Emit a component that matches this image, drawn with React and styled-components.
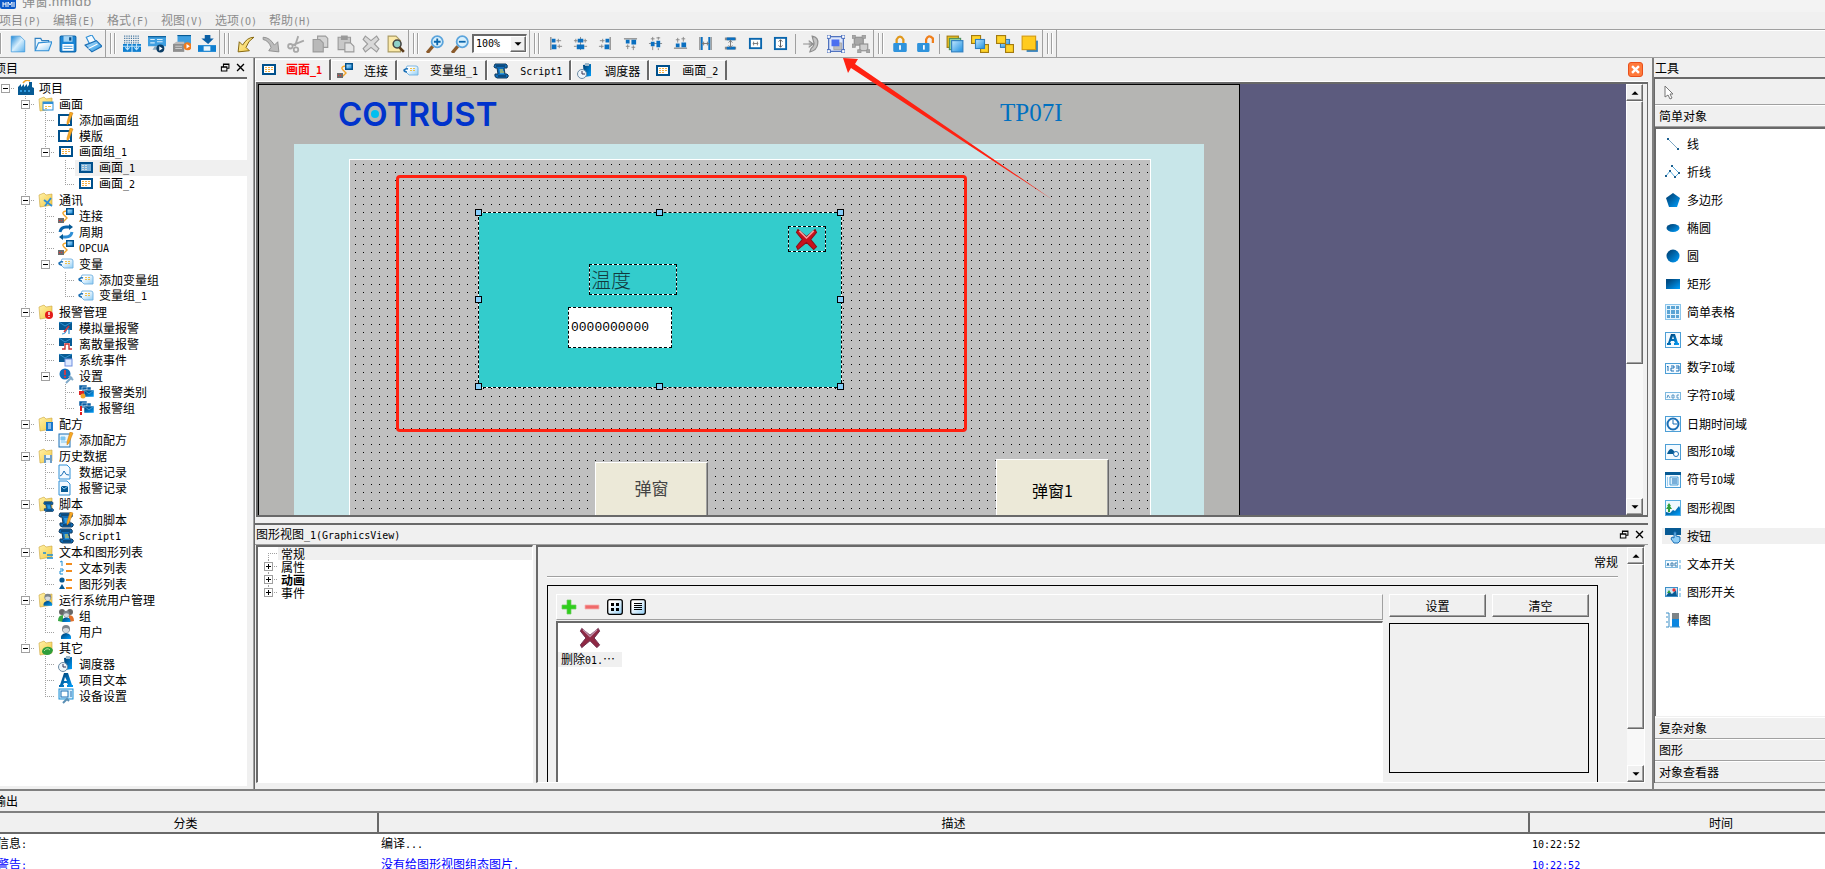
import React from 'react';
import styled, {createGlobalStyle, css} from 'styled-components';


const GlobalStyle = createGlobalStyle`
  * {
    box-sizing: border-box;
  }

  body {
    margin: 0;
    overflow: hidden;
    background: #f0f0f0;
    color: #000;
    font: 12px/16px "Noto Sans CJK SC", sans-serif;
  }

  button, input, select {
    font: inherit;
    color: inherit;
  }

  ul {
    margin: 0;
    padding: 0;
    list-style: none;
  }
`


/* ---------- icons ---------- */

const screenIcon = (
  <>
    <rect x="1" y="2" width="14" height="11" fill="#00508c"/>
    <rect x="3" y="4" width="10" height="7" fill="#fff"/>
    <path d="M4 5h2v1H4zM7 5h2v1H7zM10 5h2v1h-2zM4 7h2v1H4zM7 7h2v1H7zM10 7h2v1h-2zM4 9h2v1H4zM7 9h2v1H7z" fill="#f5b041"/>
  </>
)

const pencil = <path d="M12 0l3 1-4 10-2 2 0-3z" fill="#f7a823" stroke="#c97a10" strokeWidth=".5"/>

const folder = <path d="M1 3l5-2 2 2 6-1v11l-12 2z" fill="url(#gold)" stroke="#c9a23a" strokeWidth=".6"/>

const scroll = (
  <>
    <path d="M2 1h11q2 1 1 4h-3l1 6h2q2 1 1 3l-1 1H4q-3-1-2-4h3L4 5H2Q0 4 2 1z" fill="#0f6cb8" stroke="#123a5c"/>
    <path d="M3 3h9M5 13h8" stroke="#0c2b45"/>
    <path d="M6 6h4l1 5H7z" fill="#2f9be0"/>
  </>
)

const person = (
  <>
    <path d="M3 15q-1-5 5-6 6 1 5 6z" fill="url(#blue)"/>
    <circle cx="8" cy="5" r="4" fill="#7d858c"/>
    <path d="M5 5q3-2 6 0v2q-3 4-6 0z" fill="#d5dade"/>
  </>
)

const tag = (
  <>
    <path d="M4 3h9q2 0 2 2v7H6L2 8z" fill="url(#pale)" stroke="#6fb0e0" strokeWidth=".9"/>
    <path d="M4 9Q1 9 1 7q2-2 4-1" fill="none" stroke="#1b6fb5" strokeWidth="1.500"/>
    <path d="M7 5h2v1H7zM10 5h2v1h-2zM7 7h2v1H7zM10 7h2v1h-2z" fill="#eec04a"/>
  </>
)

const linkIcon = (
  <>
    <path d="M8 3Q3 4 6 7t3 3-4 4" fill="none" stroke="#f2a52a" strokeWidth="1.400"/>
    <rect x="8" y="0" width="8" height="7" fill="#00508c"/>
    <rect x="9.500" y="1.500" width="5" height="4" fill="url(#sky)"/>
    <path d="M0 10h6v5H0z" fill="#6d6d6d"/>
    <path d="M1 12h1v1H1zM3 12h1v1H3z" fill="#e33"/>
  </>
)

const alarmMail = (
  <>
    <path d="M1 2h13v8H1z" fill="#075a94"/>
    <path d="M1 2l6 4 7-4" fill="none" stroke="#3d9fe0" strokeWidth=".8"/>
  </>
)

const alarmStack = (
  <>
    <path d="M1 1h8v5H1zM4 3h9v5H4z" fill="#0a5fa5" stroke="#fff" strokeWidth=".5"/>
    <rect x="6" y="6" width="10" height="7" fill="url(#blue)" stroke="#fff" strokeWidth=".5"/>
    <path d="M6 6l5 4 5-4" fill="none" stroke="#5fb0e8" strokeWidth=".7"/>
  </>
)

const clipboardClock = (
  <>
    <path d="M6 2l8-1v12l-7 1z" fill="url(#blue)"/>
    <path d="M8 0h4v3H8z" fill="#9db7c9"/>
    <circle cx="5" cy="11" r="4.500" fill="#eef5fa" stroke="#6c8aa3"/>
    <path d="M5 8v3h3" fill="none" stroke="#335"/>
  </>
)

const magnifier = (
  <>
    <path d="M1 16l5-6" stroke="#8b5a2b" strokeWidth="3"/>
    <circle cx="10" cy="6" r="5" fill="#d9f0fc" stroke="#5ba4dc" strokeWidth="1.600"/>
  </>
)

const frameBox = <rect x=".5" y=".5" width="15" height="15" fill="#f3faff" stroke="#4d9fd6"/>

const ICONS = {
  newFile: <path d="M2 1h8l4 4v10H2z" fill="url(#file)" stroke="#2f8fd6" strokeWidth=".6"/>,
  open: (
    <>
      <path d="M1 13V3h5l1 2h6v3" fill="#e8f5fd" stroke="#2f7fc0"/>
      <path d="M1 14L4 7l12-1-3 8z" fill="url(#pale)" stroke="#2f8fd6"/>
    </>
  ),
  save: (
    <>
      <rect x="1" y="1" width="14" height="14" rx="1" fill="#1b86d6" stroke="#0a66ad"/>
      <path d="M4 1h8v5H4z" fill="#a5d5f5"/>
      <path d="M9 2h2v3H9z" fill="#0a4f8a"/>
      <path d="M3 8h10v6H3z" fill="#fff"/>
      <path d="M4 10h8M4 12h8" stroke="#5ba4dc"/>
    </>
  ),
  print: (
    <>
      <path d="M2 2l5-2 5 8-6 2z" fill="#f4faff" stroke="#2f8fd6"/>
      <path d="M1 9l10-4 5 5-9 5z" fill="url(#sky)" stroke="#1b6fb5"/>
      <path d="M4 12l8-4" stroke="#fff"/>
    </>
  ),
  compile: (
    <>
      <path d="M1 1h14M1 3h14M1 5h14M1 7h14" stroke="#3a6f9c" strokeDasharray="1 1"/>
      <path d="M0 8h16v7H0z" fill="#0f7fd0"/>
      <path d="M2 11l2 2 2-2M10 11l2 2 2-2M0 10h16M8 8v7M4 7v6M12 7v6" stroke="#bfe3fa" fill="none"/>
    </>
  ),
  simulate: (
    <>
      <path d="M0 1h16v9H0z" fill="#3f9fe0"/>
      <path d="M0 1h16v1H0z" fill="#075a94"/>
      <path d="M2 4h4M8 4h5M8 6h5M2 7h4" stroke="#d5ecfb"/>
      <path d="M6 10h4v3H4z" fill="#8aa9bf"/>
      <circle cx="11" cy="12" r="3.500" fill="#0a3d66"/>
      <path d="M10 10l3 2-3 2z" fill="#fff"/>
    </>
  ),
  simulateOffline: (
    <>
      <path d="M4 0h12v8H4z" fill="#3f9fe0"/>
      <path d="M4 0h12v1H4z" fill="#075a94"/>
      <path d="M0 8h10v7H0z" fill="#8f8f8f"/>
      <path d="M0 8l3-2h7v2z" fill="#bbb"/>
      <path d="M2 10h6M2 12h6" stroke="#c9c9c9"/>
      <circle cx="13" cy="10" r="3.500" fill="#f07a1c"/>
      <path d="M12 8l3 2-3 2z" fill="#fff"/>
    </>
  ),
  download: (
    <>
      <path d="M6 0h5v3h3l-5 5-6-5h3z" fill="#0a5fa5"/>
      <path d="M0 9h16v6H0z" fill="#0f7fd0"/>
      <path d="M5 10h6v4H5z" fill="#e8f5fd"/>
    </>
  ),
  undo: <path d="M1 15l1-9 3 3q4-7 10-7-5 3-7 9l3 3z" fill="url(#gold)" stroke="#7a5a00" strokeWidth=".8"/>,
  redo: <path d="M15 15l-1-9-3 3Q7 2 1 2l0 2q5 1 7 7l-2 3z" fill="#bcbcbc" stroke="#8b8b8b" strokeWidth=".8"/>,
  cut: (
    <g fill="none" stroke="#a8a8a8" strokeWidth="1.600">
      <path d="M10 1L7 10M15 5L5 9"/>
      <circle cx="3" cy="10" r="2"/>
      <circle cx="8" cy="13" r="2"/>
    </g>
  ),
  copy: (
    <g fill="#d4d4d4" stroke="#9a9a9a">
      <path d="M5 1h7l2 2v8H5z"/>
      <path d="M1 4h6l3 3v8H1z" fill="#b9b9b9"/>
    </g>
  ),
  paste: (
    <g fill="#c8c8c8" stroke="#9a9a9a">
      <path d="M1 2h11v11H1z"/>
      <path d="M4 1h5v3H4z" fill="#9a9a9a"/>
      <path d="M7 7h5l3 3v5H7z" fill="#e5e5e5"/>
    </g>
  ),
  remove: (
    <path d="M3 1l5 4 5-4 2 3-4 4 4 4-2 3-5-4-5 4-2-3 4-4-4-4z" fill="#d9d9d9" stroke="#9b9b9b"/>
  ),
  find: (
    <>
      <path d="M1 1h7l4 4v10H1z" fill="#fbe9a8" stroke="#a99a62"/>
      <circle cx="9" cy="8" r="3.500" fill="#8fd0c8" stroke="#444" strokeWidth="1.400"/>
      <path d="M11 11l4 4" stroke="#5d3d1c" strokeWidth="2.400"/>
    </>
  ),
  zoomIn: <>{magnifier}<path d="M10 3v6M7 6h6" stroke="#0a66ad" strokeWidth="1.600"/></>,
  zoomOut: <>{magnifier}<path d="M7 6h6" stroke="#0a66ad" strokeWidth="1.600"/></>,
  alignLeft: (
    <>
      <path d="M3 1v14" stroke="#8b8b8b" strokeWidth="1.400"/>
      <path d="M4 3h4v4H4zM4 9h5v5H4z" fill="#0a6fc0"/>
      <path d="M9 5h5M10 11h5M11 3v4M12 9v4" stroke="#888"/>
    </>
  ),
  alignCenter: (
    <>
      <path d="M8 1v14" stroke="#8b8b8b"/>
      <path d="M5 3h6v4H5zM4 9h8v5H4z" fill="#0a6fc0"/>
      <path d="M1 5h4M11 5h4M1 11h3M12 11h3M3 3v4M13 3v4" stroke="#888"/>
    </>
  ),
  alignRight: (
    <>
      <path d="M13 1v14" stroke="#8b8b8b" strokeWidth="1.400"/>
      <path d="M8 3h4v4H8zM7 9h5v5H7z" fill="#0a6fc0"/>
      <path d="M2 5h5M1 11h5M5 3v4M4 9v4" stroke="#888"/>
    </>
  ),
  alignTop: (
    <>
      <path d="M1 3h14" stroke="#8b8b8b" strokeWidth="1.400"/>
      <path d="M3 4h4v4H3zM9 4h5v5H9z" fill="#0a6fc0"/>
      <path d="M5 9v5M11 10v5M3 11h4M9 12h4" stroke="#888"/>
    </>
  ),
  alignMiddle: (
    <>
      <path d="M1 8h14" stroke="#8b8b8b"/>
      <path d="M3 6h4v5H3zM9 5h4v7H9z" fill="#0a6fc0"/>
      <path d="M5 1v4M5 11v4M11 1v3M11 13v2M3 3h4M9 2h4" stroke="#888"/>
    </>
  ),
  alignBottom: (
    <>
      <path d="M1 13h14" stroke="#8b8b8b" strokeWidth="1.400"/>
      <path d="M3 8h4v4H3zM9 7h5v5H9z" fill="#0a6fc0"/>
      <path d="M5 2v5M11 1v5M3 4h4M9 3h4" stroke="#888"/>
    </>
  ),
  spaceH: (
    <>
      <path d="M2 1v14M14 1v14" stroke="#8b8b8b" strokeWidth="1.400"/>
      <path d="M4 1v14M12 1v14" stroke="#0a6fc0" strokeWidth="2"/>
      <path d="M4 8h8M6 6v4M10 6v4" stroke="#777"/>
    </>
  ),
  spaceV: (
    <>
      <path d="M2 3h12M2 13h12" stroke="#8b8b8b" strokeWidth="3"/>
      <path d="M4 3h9M4 13h9" stroke="#0a6fc0" strokeWidth="3"/>
      <path d="M8 4v8M6 7l2-2 2 2M6 10l2 2 2-2" fill="none" stroke="#777"/>
    </>
  ),
  sameWidth: (
    <>
      <rect x="2" y="3" width="12" height="10" fill="#fff" stroke="#0a66ad" strokeWidth="2"/>
      <path d="M5 8h6M6 6v4M10 6v4" stroke="#777"/>
    </>
  ),
  sameHeight: (
    <>
      <rect x="2" y="2" width="12" height="12" fill="#fff" stroke="#0a66ad" strokeWidth="2"/>
      <path d="M8 4v8M6 6l2-2 2 2M6 10l2 2 2-2" fill="none" stroke="#555"/>
    </>
  ),
  rotate: (
    <path d="M1 8h8M9 1q6 1 5 7t-7 7l1-3q4-3 2-7zM6 5l4 3-4 3" fill="#c4c4c4" stroke="#8d8d8d"/>
  ),
  group: (
    <>
      <rect x="1.500" y="1.500" width="13" height="13" fill="#dfe8fb" stroke="#3b62b8"/>
      <path d="M8 7h5v6H6v-3" fill="#bdbdbd" stroke="#999" strokeWidth=".6"/>
      <rect x="4" y="4" width="7" height="6" fill="#4b6ff0"/>
      <path d="M0 0h3v3H0zM13 0h3v3h-3zM0 13h3v3H0zM13 13h3v3h-3z" fill="#fff" stroke="#3b62b8" strokeWidth=".8"/>
    </>
  ),
  ungroup: (
    <g fill="#a8a8a8" stroke="#8f8f8f">
      <rect x="2" y="2" width="8" height="7"/>
      <rect x="7" y="8" width="7" height="6" fill="#cfcfcf"/>
      <path d="M0 0h3v3H0zM9 0h3v3H9zM0 8h3v3H0zM13 13h3v3h-3zM5 13h3v3H5z" strokeWidth=".6"/>
    </g>
  ),
  lock: (
    <>
      <path d="M5 8V4q3-5 6 0v4" fill="none" stroke="#e0981c" strokeWidth="2"/>
      <rect x="2" y="7" width="12" height="8" rx="1" fill="#2f93dc"/>
      <path d="M8 9v4" stroke="#fff" strokeWidth="1.600"/>
    </>
  ),
  unlock: (
    <>
      <path d="M9 7V4q2-5 6-1v4" fill="none" stroke="#f07f1c" strokeWidth="2"/>
      <rect x="1" y="7" width="11" height="8" rx="1" fill="#2f93dc"/>
      <path d="M7 9v4" stroke="#fff" strokeWidth="1.600"/>
    </>
  ),
  bringFront: (
    <>
      <rect x="1" y="1" width="10" height="10" fill="#f5c518" stroke="#a37b10"/>
      <rect x="3" y="3" width="10" height="10" fill="#8fd0a0" stroke="#4d8f60"/>
      <rect x="5" y="5" width="10" height="10" fill="url(#sky)" stroke="#2f7fc0"/>
    </>
  ),
  bringForward: (
    <>
      <rect x=".5" y=".5" width="8" height="7" fill="#ffd42a" stroke="#a37b10"/>
      <rect x="8.500" y="8.500" width="7" height="7" fill="#ffd42a" stroke="#a37b10"/>
      <rect x="4" y="4" width="8" height="8" fill="url(#sky)" stroke="#2f7fc0"/>
    </>
  ),
  sendBackward: (
    <>
      <rect x="4" y="4" width="8" height="7" fill="url(#sky)" stroke="#2f7fc0"/>
      <rect x=".5" y=".5" width="8" height="7" fill="#ffd42a" stroke="#a37b10"/>
      <rect x="8.500" y="8.500" width="7" height="7" fill="#ffd42a" stroke="#a37b10"/>
    </>
  ),
  sendBack: (
    <>
      <rect x="5" y="5" width="10" height="10" fill="#2f7fc0"/>
      <rect x="1" y="1" width="12" height="12" fill="#ffcb1f" stroke="#d39a10"/>
    </>
  ),

  factory: (
    <>
      <path d="M0 15V7l3-3v3l3-3v3l3-3v3l2-2V2h3v5l2 1v7z" fill="#075a94"/>
      <path d="M5 3q3-4 7-2" fill="none" stroke="#f2a52a" strokeWidth="1.500"/>
      <path d="M2 10h2v2H2zM6 10h2v2H6zM10 10h2v2h-2z" fill="#2f9be0"/>
    </>
  ),
  folderScreen: (
    <>
      {folder}
      <rect x="5" y="6" width="10" height="8" fill="#fff" stroke="#2f8fd6"/>
      <path d="M5 7h10" stroke="#2f8fd6" strokeWidth="2"/>
      <path d="M7 10h2v1H7zM10 10h3v1h-3zM7 12h2v1H7z" fill="#eec04a"/>
    </>
  ),
  addScreen: (
    <>
      <rect x="1" y="3" width="12" height="10" fill="#fff" stroke="#00508c" strokeWidth="2"/>
      {pencil}
    </>
  ),
  screen: screenIcon,
  screenActive: (
    <>
      <rect x="1" y="2" width="14" height="11" fill="#00508c"/>
      <rect x="3" y="4" width="10" height="7" fill="#7db2da"/>
      <path d="M4 5h2v1H4zM7 5h2v1H7zM4 7h2v1H4zM7 7h2v1H7zM4 9h2v1H4zM7 9h2v1H7z" fill="#d9dfe0"/>
    </>
  ),
  folderComm: <>{folder}<path d="M6 8l8 6M13 6l-6 8" stroke="#2f8fd6" strokeWidth="1.800"/></>,
  link: linkIcon,
  cycle: (
    <g fill="none" stroke="#0a66ad" strokeWidth="3">
      <path d="M2 8q1-5 6-5h4"/>
      <path d="M14 8q-1 5-6 5H4" stroke="#2f8fd6"/>
      <path d="M11 0l4 3-4 3zM5 10l-4 3 4 3z" fill="#075a94" stroke="none"/>
    </g>
  ),
  tag,
  folderAlarm: (
    <>
      {folder}
      <circle cx="11" cy="11" r="4" fill="#e31c1c"/>
      <path d="M11 8v3M11 12v1" stroke="#fff" strokeWidth="1.400"/>
    </>
  ),
  alarmAnalog: (
    <>
      {alarmMail}
      <path d="M4 14l5-5 4 5z" fill="#fff"/>
      <path d="M4 14q4 0 5-6l2 1v5" fill="none" stroke="#2f8fd6" strokeWidth="1.200"/>
      <path d="M6 12l5-6" stroke="#d33" strokeWidth="1.400"/>
    </>
  ),
  alarmDiscrete: (
    <>
      {alarmMail}
      <path d="M6 14V7h6v7z" fill="#fff"/>
      <path d="M4 13h3V8h4v5h3" fill="none" stroke="#c33" strokeWidth="1.400"/>
    </>
  ),
  alarmSystem: <>{alarmMail}<rect x="7" y="7" width="7" height="7" fill="#dce8ff" stroke="#6f8fe0"/></>,
  settings: (
    <>
      <circle cx="7" cy="6" r="5.500" fill="#0f6cb8"/>
      <path d="M7 2v5M7 8v2" stroke="#e33" strokeWidth="1.600"/>
      <path d="M8 15l6-6M11 8l4 4" stroke="#7fa9c9" strokeWidth="2"/>
    </>
  ),
  alarmClass: <>{alarmStack}<path d="M1 7h5v4H1z" fill="#d22"/><circle cx="5" cy="12" r="2.500" fill="#f2a52a"/></>,
  alarmGroup: <>{alarmStack}<path d="M3 6v5M3 12v3" stroke="#e31c1c" strokeWidth="2"/></>,
  folderRecipe: <>{folder}<path d="M8 6h7v9H8z" fill="#1b78cc"/><path d="M10 8h3M10 10h3M10 12h3" stroke="#fff"/></>,
  addRecipe: (
    <>
      <rect x="1" y="2" width="11" height="13" fill="#e8f5fd" stroke="#1b6fb5"/>
      <path d="M3 5h4v3H3zM3 10h6" fill="#7cc4f0" stroke="#7cc4f0"/>
      {pencil}
    </>
  ),
  folderHistory: <>{folder}<path d="M6 7h8v8H6z" fill="#6d9dc5"/><path d="M8 7h4v3H8zM8 12h4v3H8z" fill="#e8f5fd"/></>,
  dataLog: (
    <>
      <path d="M1 1h8l3 3v11H1z" fill="#f4faff" stroke="#2f8fd6"/>
      <path d="M2 12q2 0 4-5 2 5 5 4" fill="none" stroke="#1b6fb5"/>
    </>
  ),
  alarmLog: (
    <>
      <path d="M1 1h8l3 3v11H1z" fill="#f4faff" stroke="#2f8fd6"/>
      <path d="M3 6h7v6H3z" fill="#075a94"/>
      <path d="M3 6l3 3 4-3" fill="none" stroke="#7cc4f0"/>
    </>
  ),
  folderScript: <>{folder}<g transform="translate(5 5) scale(.7)">{scroll}</g></>,
  addScript: <>{scroll}{pencil}</>,
  script: <>{scroll}<path d="M7 7h3M7 9h4" stroke="#f2c52a"/></>,
  folderList: <>{folder}<path d="M5 9h3M9 11h6M9 14h6" stroke="#1b8fd6" strokeWidth="1.600"/></>,
  textList: (
    <>
      <path d="M2 2l2-1v5M2 9h3v2H2v3h3" fill="none" stroke="#1b8fd6"/>
      <path d="M8 4h6M8 11h6" stroke="#f28c1c" strokeWidth="1.800"/>
    </>
  ),
  graphicList: (
    <>
      <circle cx="4" cy="4" r="2.600" fill="#075a94"/>
      <path d="M1 13l3-5 3 5z" fill="#075a94"/>
      <path d="M8 4h6M8 12h6" stroke="#f28c1c" strokeWidth="1.800"/>
    </>
  ),
  folderUser: <>{folder}<g transform="translate(3 1) scale(.85)">{person}</g></>,
  users: (
    <>
      <path d="M0 13q0-6 5-6v7z" fill="#3aa845"/>
      <path d="M16 13q0-6-5-6v7z" fill="#e2702a"/>
      <circle cx="4" cy="4" r="3" fill="#666"/>
      <circle cx="12" cy="4" r="3" fill="#666"/>
      <g transform="translate(2 2) scale(.8)">{person}</g>
    </>
  ),
  user: person,
  folderOther: (
    <>
      {folder}
      <path d="M4 12q0-4 4-5 5-1 7 3-1 5-6 5-4 0-5-3z" fill="#2f9e3a"/>
      <path d="M6 11q3-4 6-1" stroke="#b7e5a5" fill="none"/>
    </>
  ),
  scheduler: clipboardClock,
  letterA: (
    <path d="M6 1h4l4 12h1v2H9v-2h1l-1-2H6l-1 2h1v2H1v-2h1zM7 5L6 9h3z" fill="url(#blue)" fillRule="evenodd"/>
  ),
  device: (
    <>
      <rect x="1" y="1" width="14" height="10" fill="#d8eefc" stroke="#1b8fd6"/>
      <rect x="3" y="3" width="7" height="6" fill="#fff" stroke="#1b6fb5"/>
      <path d="M12 4h2M12 6h2M12 8h2" stroke="#1b6fb5"/>
      <path d="M5 15l4-4 2 2" fill="none" stroke="#5a8fb5" strokeWidth="2"/>
    </>
  ),

  line: <><path d="M3 3l10 10" stroke="#7da7c4"/><path d="M2 2h2v2H2zM12 12h2v2h-2z" fill="#1b5f8f"/></>,
  polyline: (
    <>
      <path d="M1 12l4-5 5 6 4-4-7-7" fill="none" stroke="#58ade0"/>
      <path d="M0 11h2v2H0zM4 6h2v2H4zM9 12h2v2H9zM13 8h2v2h-2zM6 1h2v2H6z" fill="#1b5f8f"/>
    </>
  ),
  polygon: <path d="M8 1l7 5-3 9H4L1 6z" fill="url(#blue)"/>,
  ellipse: <ellipse cx="8" cy="8" rx="6.500" ry="4" fill="url(#blue)"/>,
  circle: <circle cx="8" cy="8" r="6.500" fill="url(#blue)"/>,
  rect: <rect x="1" y="3" width="14" height="10" fill="url(#blue)"/>,
  table: (
    <>
      <rect x=".5" y=".5" width="15" height="15" fill="#e4f3fc" stroke="#8cc6ec"/>
      <path d="M2 2h3v3H2zM6 2h4v3H6zM11 2h3v3h-3zM2 6h3v4H2zM6 6h4v4H6zM11 6h3v4h-3zM2 11h3v3H2zM6 11h4v3H6zM11 11h3v3h-3z" fill="#5ba4d4"/>
    </>
  ),
  textField: (
    <>
      {frameBox}
      <path d="M6 2h4l3 9h1v2H9v-2h1l-1-2H6l-1 2h1v2H2v-2h1zM8 4L7 7h2z" fill="url(#blue)" fillRule="evenodd"/>
    </>
  ),
  numberField: (
    <>
      <rect x=".5" y="3.500" width="15" height="10" fill="#f3faff" stroke="#4d9fd6"/>
      <path d="M2 7l1-1v5M6 6h3v2H6v3h3M11 6h3v5h-3M11 8h3" fill="none" stroke="#1b6fb5"/>
    </>
  ),
  charField: (
    <>
      <rect x=".5" y="4.500" width="15" height="7" fill="#f3faff" stroke="#7db9e0"/>
      <path d="M2 10l1-3 2 3M7 10V7h2v3zM14 7h-2v3h2" fill="none" stroke="#4d8fbf" strokeWidth=".9"/>
    </>
  ),
  dateField: (
    <>
      {frameBox}
      <circle cx="8" cy="8" r="5.500" fill="#fff" stroke="#1b6fb5" strokeWidth="2"/>
      <path d="M8 4v4h4" fill="none" stroke="#1b6fb5"/>
    </>
  ),
  graphicField: (
    <>
      {frameBox}
      <path d="M2 10q2-5 4-5t5 5z" fill="#075a94"/>
      <circle cx="11" cy="10" r="2.500" fill="#fff" stroke="#1b6fb5"/>
    </>
  ),
  symbolField: (
    <>
      {frameBox}
      <path d="M0 0h16v3H0z" fill="#075a94"/>
      <path d="M2 5h1v9H2z" fill="#9bcdf0"/>
      <path d="M5 5h8v8H5z" fill="#d8eefc" stroke="#4d9fd6"/>
      <path d="M7 7h5M7 9h5M7 11h5" stroke="#1b6fb5"/>
    </>
  ),
  graphicView: (
    <>
      <rect x=".5" y=".5" width="15" height="15" fill="#eef8fe" stroke="#58ade0"/>
      <path d="M1 15v-3l4 1 3-3 2 1 4-5 1 2v7z" fill="url(#blue)"/>
      <path d="M4 3l2 3H5l2 3H5v3H3V9H1l2-3H2z" fill="#2f9e3a"/>
    </>
  ),
  button: (
    <>
      <path d="M0 0h16v7H0z" fill="#075a94"/>
      <path d="M9 4h2v4l4 1v4l-2 2H9l-3-4 1-2 2 1z" fill="#8fcdf5" stroke="#1b6fb5"/>
    </>
  ),
  textSwitch: (
    <>
      <rect x=".5" y="4.500" width="12" height="7" fill="#f3faff" stroke="#7db9e0"/>
      <path d="M2 10l1-3 1 3M6 10V7h2v3zM12 7h-2v3h2" fill="none" stroke="#3d7faf"/>
      <path d="M15 4v3M15 9v4" stroke="#58ade0"/>
    </>
  ),
  graphicSwitch: (
    <>
      <rect x=".5" y="3.500" width="12" height="9" fill="#cfe8fa" stroke="#3d8fc6"/>
      <path d="M1 12l3-4 3 2 4-4 1 6z" fill="#075a94"/>
      <path d="M2 9l2-3 2 3z" fill="#2f9e3a"/>
      <circle cx="9" cy="6" r="1.700" fill="#e33"/>
      <path d="M15 4v3M15 9v4" stroke="#58ade0"/>
    </>
  ),
  bar: (
    <>
      <path d="M7 1h7v6H7z" fill="#7d8488"/>
      <path d="M7 7h7v8H7z" fill="#0a86e0"/>
      <path d="M1 1h3M1 5h2M1 10h2M1 15h3M4 1v14M5 15h10" stroke="#3d8fc6" fill="none"/>
    </>
  ),
  add: <path d="M6 1h4v5h5v4h-5v5H6v-5H1V6h5z" fill="#2fcf1c" stroke="#6fc95f" strokeWidth=".7"/>,
  minus: <path d="M1 6h14v4H1z" fill="#f06a6a" stroke="#f5b5b5" strokeWidth=".8"/>,
  gridView: (
    <>
      <rect x=".7" y=".7" width="14.600" height="14.600" rx="2" fill="url(#pale)" stroke="#000" strokeWidth="1.300"/>
      <path d="M4 4h3v3H4zM9 4h3v3H9zM4 9h3v3H4zM9 9h3v3H9z"/>
    </>
  ),
  listView: (
    <>
      <rect x=".7" y=".7" width="14.600" height="14.600" rx="2" fill="url(#pale)" stroke="#000" strokeWidth="1.300"/>
      <path d="M4 4.500h8M4 6.500h8M4 8.500h8M4 10.500h8" stroke="#000"/>
    </>
  ),
  cross: (
    <>
      <path d="M2 1l6 5 6-5 1 2-4 5 4 5-2 2-5-5-6 5-1-2 4-5-4-5z" fill="#c8101c" stroke="#8a1018" strokeWidth=".7"/>
      <path d="M3 2l5 5 5-5" fill="none" stroke="#f2a5a0"/>
    </>
  ),
  crossDim: (
    <>
      <path d="M2 1l6 5 6-5 1 2-4 5 4 5-2 2-5-5-6 5-1-2 4-5-4-5z" fill="#8f2843" stroke="#6d2f50" strokeWidth=".7"/>
      <path d="M3 2l5 5 5-5" fill="none" stroke="#bf93ad"/>
    </>
  ),
  pointer: <path d="M5 2v11l3-2 2 4 2-1-2-4h3z" fill="#fff" stroke="#777"/>,
  float: <path d="M5 6V3h8v6h-3M5 3.500h8M2 7h8v6H2zM2 7.500h8" fill="none" stroke="#000" strokeWidth="1.500"/>,
  close: <path d="M3 3l10 10M13 3L3 13" stroke="#000" strokeWidth="2"/>,
  up: <path d="M4 10h8L8 6z"/>,
  down: <path d="M4 6h8l-4 4z"/>,
  app: (
    <>
      <rect width="16" height="16" rx="2" fill="#0a58c8"/>
      <path d="M3 9v5M3 11h3M6 9v5M8 14V9l2 3 2-3v5M14 9v5" fill="none" stroke="#fff"/>
    </>
  ),
}

const IconStl = styled.svg`
  flex: none;
  display: block;
  width: ${p => p.$size || 16}px;
  height: ${p => p.$size || 16}px;
`

const Icon = ({name, size}) => (
  <IconStl viewBox="0 0 16 16" $size={size} aria-hidden="true">{ICONS[name]}</IconStl>
)

const GradientsStl = styled.svg`
  position: absolute;
  width: 0;
  height: 0;
`

const Gradients = () => (
  <GradientsStl aria-hidden="true">
    <defs>
      <linearGradient id="blue" x1="0" y1="0" x2="1" y2="1">
        <stop offset=".2" stopColor="#004c84"/>
        <stop offset="1" stopColor="#00a0ff"/>
      </linearGradient>
      <linearGradient id="sky" x1="0" y1="0" x2="1" y2="1">
        <stop offset="0" stopColor="#c4e8ff"/>
        <stop offset="1" stopColor="#1b8fe0"/>
      </linearGradient>
      <linearGradient id="pale" x1="0" y1="0" x2="1" y2="1">
        <stop offset=".3" stopColor="#fff"/>
        <stop offset="1" stopColor="#8fcdf5"/>
      </linearGradient>
      <linearGradient id="file" x1="0" y1="0" x2="1" y2="1">
        <stop offset="0" stopColor="#1b86d6"/>
        <stop offset=".5" stopColor="#d8effd"/>
        <stop offset="1" stopColor="#5bb0ec"/>
      </linearGradient>
      <linearGradient id="gold" x1="0" y1="0" x2="1" y2="1">
        <stop offset="0" stopColor="#fff2a8"/>
        <stop offset="1" stopColor="#f3c945"/>
      </linearGradient>
    </defs>
  </GradientsStl>
)


/* ---------- text ---------- */

// half-width latin next to 12px hanzi
const LatinStl = styled.span`
  font-family: "DejaVu Sans Mono", monospace;
  font-size: 10px;
`

const Label = ({children}) => (
  children.split(/([\x20-\x7e]+)/).filter(Boolean).map((run, i) => (
    /[\x20-\x7e]/.test(run) ? <LatinStl key={i}>{run}</LatinStl> : run
  ))
)


/* ---------- window frame ---------- */

const raised = css`
  border: 1px solid;
  border-color: #fff #696969 #696969 #fff;
  box-shadow: inset -1px -1px #a0a0a0;
`

const sunken = css`
  border-style: solid;
  border-width: 2px 1px 1px 2px;
  border-color: #696969 #fff #fff #696969;
`

const WindowStl = styled.div`
  display: flex;
  flex-direction: column;
  height: calc(100vh + 18px);
  margin: -18px 0 0 -6px;
  background: #f0f0f0;
  white-space: nowrap;
`

const TitleBarStl = styled.header`
  display: flex;
  align-items: center;
  gap: 6px;
  flex: none;
  height: 30px;
  padding: 8px 0 0 6px;
  background: #f3f3f3;
  color: #8c8c8c;
  font-size: 13px;
`

const MenuBarStl = styled.nav`
  display: flex;
  flex: none;
  height: 17px;
`

const MenuButtonStl = styled.button`
  width: 54px;
  padding: 0 0 0 5px;
  border: 0;
  background: none;
  color: #8c8c8c;
  text-align: left;
  line-height: 16px;
`

const ToolbarStl = styled.div`
  display: flex;
  flex: none;
  height: 29px;
  margin-left: -1px;
  border-top: 1px solid #a0a0a0;
  border-bottom: 1px solid #a0a0a0;
  box-shadow: inset 0 1px #fff;
`

const ToolGroupStl = styled.div`
  display: flex;
  align-items: center;
  padding-left: 3px;
  border-right: 1px solid #a0a0a0;
  margin-right: 1px;
`

const HandleStl = styled.div`
  width: 5px;
  height: 21px;
  margin-right: 4px;
  border: 1px solid #a0a0a0;
  border-width: 0 1px;
  box-shadow: inset 1px 0 #fff, 1px 0 #fff;
`

const ToolButtonStl = styled.button`
  display: flex;
  align-items: center;
  justify-content: center;
  width: 25px;
  height: 24px;
  padding: 0;
  border: 0;
  background: none;
`

const DividerStl = styled.div`
  width: 1px;
  height: 20px;
  margin: 0 2px;
  background: #a0a0a0;
`

const ZoomBoxStl = styled.div`
  position: relative;
  width: 55px;
  height: 19px;
  margin-right: 2px;
  background: #fff;
  ${sunken}
`

const ZoomSelectStl = styled.select`
  display: block;
  width: 100%;
  height: 16px;
  padding: 0 0 0 2px;
  border: 0;
  outline: 0;
  appearance: none;
  background: none;
  font: 10px/16px "DejaVu Sans Mono", monospace;
`

const ZoomArrowStl = styled.div`
  position: absolute;
  top: 0;
  right: 0;
  display: flex;
  align-items: center;
  justify-content: center;
  width: 16px;
  height: 16px;
  background: #f0f0f0;
  pointer-events: none;
  ${raised}
`

const TOOL_GROUPS = [
  ['newFile', 'open', 'save', 'print'],
  ['compile', 'simulate', 'simulateOffline', 'download'],
  ['undo', 'redo', 'cut', 'copy', 'paste', 'remove', 'find'],
  ['zoomIn', 'zoomOut', 'zoomBox'],
  ['alignLeft', 'alignCenter', 'alignRight', 'alignTop', 'alignMiddle', 'alignBottom', 'spaceH', 'spaceV', 'sameWidth', 'sameHeight', '|', 'rotate', 'group', 'ungroup'],
  ['lock', 'unlock', '|', 'bringFront', 'bringForward', 'sendBackward', 'sendBack'],
  [],
]

const ARRANGE_TOOLS = TOOL_GROUPS[4].slice(0, 10)

const ZoomBox = () => (
  <ZoomBoxStl>
    <ZoomSelectStl aria-label="缩放" defaultValue="100%">
      <option>100%</option>
    </ZoomSelectStl>
    <ZoomArrowStl><Icon name="down" size={14}/></ZoomArrowStl>
  </ZoomBoxStl>
)

const Tool = ({name}) => {
  if (name === '|') return <DividerStl/>
  if (name === 'zoomBox') return <ZoomBox/>
  return (
    <ToolButtonStl type="button" aria-label={name}>
      <Icon name={name} size={ARRANGE_TOOLS.includes(name) ? 15 : 18}/>
    </ToolButtonStl>
  )
}

const Toolbar = () => (
  <ToolbarStl>
    {TOOL_GROUPS.map((group, i) => (
      <ToolGroupStl key={i}>
        <HandleStl/>
        {group.map((name, j) => <Tool key={j} name={name}/>)}
      </ToolGroupStl>
    ))}
  </ToolbarStl>
)

const WorkspaceStl = styled.div`
  display: grid;
  grid-template-columns: 260px minmax(0, 1fr) 177px;
  flex: 1;
  min-height: 0;
`

const DockTitleStl = styled.div`
  display: flex;
  align-items: center;
  gap: 2px;
  flex: none;
  height: ${p => p.$height || 19}px;
  padding: 0 ${p => p.$right || 0}px 0 ${p => p.$left || 0}px;
`

const DockNameStl = styled.h2`
  flex: 1;
  margin: 0;
  font-size: 12px;
  font-weight: 400;
`

const DockButtonStl = styled.button`
  width: 13px;
  height: 13px;
  padding: 1px;
  border: 0;
  background: none;
`

const DockButtons = () => (
  <>
    <DockButtonStl type="button" aria-label="浮动"><Icon name="float" size={11}/></DockButtonStl>
    <DockButtonStl type="button" aria-label="关闭"><Icon name="close" size={11}/></DockButtonStl>
  </>
)


/* ---------- scroll bar ---------- */

const ScrollBarStl = styled.div`
  display: flex;
  flex-direction: column;
  flex: none;
  width: 17px;
  background: #f8f8f8;
`

const ScrollButtonStl = styled.button`
  display: flex;
  align-items: center;
  justify-content: center;
  flex: none;
  height: 17px;
  padding: 0;
  background: #f0f0f0;
  ${raised}
`

const ThumbStl = styled.div`
  flex: ${p => p.$share};
  background: #f0f0f0;
  ${raised}
`

const RestStl = styled.div`
  flex: ${p => p.$share};
`

const ScrollBar = ({share}) => (
  <ScrollBarStl>
    <ScrollButtonStl type="button" aria-label="向上滚动"><Icon name="up" size={14}/></ScrollButtonStl>
    <ThumbStl $share={share}/>
    <RestStl $share={100 - share}/>
    <ScrollButtonStl type="button" aria-label="向下滚动"><Icon name="down" size={14}/></ScrollButtonStl>
  </ScrollBarStl>
)


/* ---------- tree ---------- */

const TreeRowStl = styled.div`
  display: flex;
  height: ${p => p.$height}px;
`

const TreeItemStl = styled.div`
  display: flex;
  align-items: center;
  gap: 5px;
  flex: 1;
  padding-left: 3px;
  line-height: ${p => p.$height}px;
  font-weight: ${p => p.$bold ? 700 : 400};
  background: ${p => p.$active ? '#f0f0f0' : 'none'};
`

const BranchStl = styled.svg`
  flex: none;
  width: 20px;
  height: ${p => p.$height}px;
`

const Branch = ({height, up, down, across, sign}) => {
  const mid = Math.floor(height / 2)
  return (
    <BranchStl viewBox={`0 0 20 ${height}`} $height={height} aria-hidden="true" shapeRendering="crispEdges">
      <g stroke="#a0a0a0" strokeDasharray="1 1">
        {up && <path d={`M10.5 0V${mid}`}/>}
        {down && <path d={`M10.5 ${mid}V${height}`}/>}
        {across && <path d={`M10 ${mid + 0.5}H20`}/>}
      </g>
      {sign && (
        <>
          <rect x="6.5" y={mid - 3.5} width="8" height="8" fill="#fff" stroke="#a0a0a0"/>
          <path d={`M8 ${mid + 0.5}h5${sign === '+' ? `M10.5 ${mid - 2}v5` : ''}`} stroke="#000"/>
        </>
      )}
    </BranchStl>
  )
}

const TreeNodes = ({nodes, height, guides = []}) => (
  <ul>
    {nodes.map((node, i) => {
      const last = i === nodes.length - 1
      const root = guides.length === 0
      return (
        <li key={node.label}>
          <TreeRowStl $height={height}>
            {guides.map((on, k) => <Branch key={k} height={height} up={on} down={on}/>)}
            <Branch
              height={height}
              up={!root || i > 0}
              down={!last}
              across
              sign={node.sign || (node.children ? '-' : null)}
            />
            <TreeItemStl $height={height} $active={node.active} $bold={node.bold}>
              {node.icon && <Icon name={node.icon}/>}
              <span><Label>{node.label}</Label></span>
            </TreeItemStl>
          </TreeRowStl>
          {node.children && <TreeNodes nodes={node.children} height={height} guides={[...guides, !last]}/>}
        </li>
      )
    })}
  </ul>
)

const n = (icon, label, children) => ({icon, label, children})

const PROJECT = [
  n('factory', '项目', [
    n('folderScreen', '画面', [
      n('addScreen', '添加画面组'),
      n('addScreen', '模版'),
      n('screen', '画面组_1', [
        {icon: 'screenActive', label: '画面_1', active: true},
        n('screen', '画面_2'),
      ]),
    ]),
    n('folderComm', '通讯', [
      n('link', '连接'),
      n('cycle', '周期'),
      n('link', 'OPCUA'),
      n('tag', '变量', [
        n('tag', '添加变量组'),
        n('tag', '变量组_1'),
      ]),
    ]),
    n('folderAlarm', '报警管理', [
      n('alarmAnalog', '模拟量报警'),
      n('alarmDiscrete', '离散量报警'),
      n('alarmSystem', '系统事件'),
      n('settings', '设置', [
        n('alarmClass', '报警类别'),
        n('alarmGroup', '报警组'),
      ]),
    ]),
    n('folderRecipe', '配方', [
      n('addRecipe', '添加配方'),
    ]),
    n('folderHistory', '历史数据', [
      n('dataLog', '数据记录'),
      n('alarmLog', '报警记录'),
    ]),
    n('folderScript', '脚本', [
      n('addScript', '添加脚本'),
      n('script', 'Script1'),
    ]),
    n('folderList', '文本和图形列表', [
      n('textList', '文本列表'),
      n('graphicList', '图形列表'),
    ]),
    n('folderUser', '运行系统用户管理', [
      n('users', '组'),
      n('user', '用户'),
    ]),
    n('folderOther', '其它', [
      n('scheduler', '调度器'),
      n('letterA', '项目文本'),
      n('device', '设备设置'),
    ]),
  ]),
]

const ProjectDockStl = styled.aside`
  display: flex;
  flex-direction: column;
  min-height: 0;
  padding: 0 6px 3px 0;
  border-right: 1px solid #a0a0a0;
`

const ProjectTreeStl = styled.div`
  flex: 1;
  min-height: 0;
  overflow: hidden;
  padding: 1px 0 0 1px;
  border-top: 2px solid #696969;
  background: #fff;
`


/* ---------- editor ---------- */

const CenterStl = styled.main`
  position: relative;
  display: flex;
  flex-direction: column;
  min-width: 0;
  min-height: 0;
  padding-bottom: 3px;
  border-left: 1px solid #696969;
`

const TabStripStl = styled.div`
  display: flex;
  align-items: flex-start;
  flex: none;
  height: 24px;
  padding: 1px 5px 0 0;
  border-bottom: 1px solid #fff;
`

const TabStl = styled.button`
  display: flex;
  align-items: center;
  gap: ${p => p.$active ? 9 : 11}px;
  height: ${p => p.$active ? 21 : 20}px;
  margin-top: ${p => p.$active ? 0 : 1}px;
  padding: 0 7px 0 5px;
  border: 1px solid #fff;
  border-right: 2px solid #696969;
  border-bottom: 0;
  background: #f0f0f0;
  color: ${p => p.$active ? '#f00' : '#000'};
  font-weight: ${p => p.$active ? 700 : 400};
  line-height: 18px;
`

const CloseTabStl = styled.button`
  display: flex;
  align-items: center;
  justify-content: center;
  width: 15px;
  height: 15px;
  margin: 3px 0 0 auto;
  padding: 0;
  border: 1px solid #e8501c;
  border-radius: 3px;
  background: #ff7a3c;
`

const TABS = [
  ['screen', '画面_1'],
  ['link', '连接'],
  ['tag', '变量组_1'],
  ['script', 'Script1'],
  ['scheduler', '调度器'],
  ['screen', '画面_2'],
]

const EditorFrameStl = styled.section`
  display: flex;
  flex: 1;
  min-height: 0;
  margin-left: 1px;
  padding-right: 4px;
  border: 2px solid #696969;
  border-right: 1px solid #696969;
`

const CanvasStl = styled.div`
  position: relative;
  flex: 1;
  overflow: hidden;
  background: #5c5b7e;
`

const DeviceStl = styled.div`
  position: absolute;
  left: 0;
  top: 0;
  width: 982px;
  height: 600px;
  border: 1px solid #000;
  background: #b5b5b3;
`

const LogoStl = styled.div`
  position: absolute;
  left: 79px;
  top: 12px;
  color: #0033cc;
  font: 600 33px/34px Inter, sans-serif;
`

const LogoDotStl = styled.i`
  position: absolute;
  left: 33px;
  top: 13px;
  width: 8px;
  height: 8px;
  border-radius: 50%;
  background: #00bff0;
`

const ModelNameStl = styled.div`
  position: absolute;
  left: 741px;
  top: 14px;
  color: #0070c0;
  font: 25px/28px "Liberation Serif", serif;
`

const BezelStl = styled.div`
  position: absolute;
  left: 35px;
  top: 59px;
  width: 910px;
  height: 540px;
  background: #c8e6e9;
`

const ScreenStl = styled.div`
  position: absolute;
  left: 55px;
  top: 15px;
  width: 802px;
  height: 500px;
  border: 1px solid #fff;
  background: #c0c0c0 conic-gradient(from 90deg at 7px 7px, #000 90deg, transparent 0) -2px -3px / 8px 8px;
`

// dashed outline, black with white in the gaps
const marquee = fill => css`
  border: 1px dashed #000;
  outline: 0;
  background: linear-gradient(${fill}, ${fill}) padding-box, #fff;
`

const PopupStl = styled.div`
  position: absolute;
  left: 128px;
  top: 52px;
  width: 364px;
  height: 176px;
  ${marquee('#33cccc')}
`

const GripStl = styled.i`
  position: absolute;
  left: ${p => p.$x};
  top: ${p => p.$y};
  width: 7px;
  height: 7px;
  margin: -4px;
  border: 1px solid #000;
  background: #87cefa;
`

const GRIPS = [
  ['0%', '0%'], ['50%', '0%'], ['100%', '0%'],
  ['0%', '50%'], ['100%', '50%'],
  ['0%', '100%'], ['50%', '100%'], ['100%', '100%'],
]

const PopupCloseStl = styled.button`
  position: absolute;
  left: 309px;
  top: 13px;
  display: flex;
  align-items: center;
  justify-content: center;
  width: 38px;
  height: 26px;
  padding: 0 2px 0 0;
  ${marquee('#33cccc')}
`

const PopupLabelStl = styled.label`
  position: absolute;
  left: 110px;
  top: 51px;
  width: 88px;
  height: 31px;
  padding-left: 1px;
  color: #12383c;
  font-size: 20px;
  font-weight: 300;
  line-height: 29px;
  ${marquee('#33cccc')}
`

const PopupInputStl = styled.input`
  position: absolute;
  left: 89px;
  top: 94px;
  width: 104px;
  height: 41px;
  padding: 0 2px;
  font: 13px/16px "Liberation Mono", monospace;
  ${marquee('#fff')}
`

const ScreenButtonStl = styled.button`
  position: absolute;
  left: ${p => p.$x}px;
  top: ${p => p.$y}px;
  width: 113px;
  height: ${p => p.$height}px;
  padding: 0 0 8px;
  background: #ece9d8;
  color: ${p => p.$color};
  font-size: ${p => p.$size}px;
  ${raised}
`

const MarkFrameStl = styled.div`
  position: absolute;
  left: 46px;
  top: 15px;
  width: 571px;
  height: 257px;
  border: 3px solid #ff2212;
  border-radius: 4px;
`

const MarkArrowStl = styled.svg`
  position: absolute;
  left: 587px;
  top: 0;
  width: 214px;
  height: 144px;
  pointer-events: none;
`

const Editor = () => (
  <>
    <TabStripStl>
      {TABS.map(([icon, label], i) => (
        <TabStl key={label} type="button" $active={i === 0}>
          <Icon name={icon}/>
          <span><Label>{label}</Label></span>
        </TabStl>
      ))}
      <CloseTabStl type="button" aria-label="关闭画面">
        <IconStl viewBox="0 0 16 16" $size={11}>
          <path d="M3 3l10 10M13 3L3 13" stroke="#fff" strokeWidth="3.500"/>
        </IconStl>
      </CloseTabStl>
    </TabStripStl>

    <EditorFrameStl>
      <CanvasStl>
        <DeviceStl>
          <LogoStl>COTRUST<LogoDotStl/></LogoStl>
          <ModelNameStl>TP07I</ModelNameStl>
          <BezelStl>
            <ScreenStl>
              <PopupStl>
                <PopupCloseStl type="button" aria-label="关闭弹窗"><Icon name="cross" size={23}/></PopupCloseStl>
                <PopupLabelStl htmlFor="temperature">温度</PopupLabelStl>
                <PopupInputStl id="temperature" defaultValue="0000000000"/>
                {GRIPS.map(([x, y]) => <GripStl key={x + y} $x={x} $y={y}/>)}
              </PopupStl>
              <ScreenButtonStl type="button" $x={245} $y={302} $height={60} $size={17} $color="#444">弹窗</ScreenButtonStl>
              <ScreenButtonStl type="button" $x={646} $y={299} $height={70} $size={16} $color="#000">弹窗1</ScreenButtonStl>
              <MarkFrameStl/>
            </ScreenStl>
          </BezelStl>
        </DeviceStl>
      </CanvasStl>
      <ScrollBar share={66}/>
    </EditorFrameStl>

    <MarkArrowStl viewBox="0 0 214 144" aria-hidden="true">
      <path d="M1 0l15 1-3 5 198 136L9 10l-3 5z" fill="#ff2212"/>
    </MarkArrowStl>
  </>
)


/* ---------- properties ---------- */

const PropertiesStl = styled.section`
  display: flex;
  flex-direction: column;
  flex: none;
  height: 263px;
  margin-top: 6px;
  border-top: 2px solid #696969;
`

const PropertiesBodyStl = styled.div`
  display: grid;
  grid-template-columns: 277px minmax(0, 1fr);
  gap: 3px;
  flex: 1;
  min-height: 0;
  padding: 0 3px 3px 1px;
  border-top: 1px solid #a0a0a0;
`

const PropertyTreeStl = styled.div`
  background: #fff;
  ${sunken}
`

const PropertyPageStl = styled.div`
  display: flex;
  min-height: 0;
  ${sunken}
`

const PageContentStl = styled.div`
  display: flex;
  flex-direction: column;
  flex: 1;
  min-width: 0;
  overflow: hidden;
  padding: 0 9px 0 9px;
`

const PageTitleStl = styled.h3`
  flex: none;
  height: 30px;
  margin: 0 0 8px;
  padding-top: 7px;
  border-bottom: 1px solid #a0a0a0;
  box-shadow: 0 1px #fff;
  font-size: 12px;
  font-weight: 400;
  text-align: right;
`

const PageBoxStl = styled.div`
  display: flex;
  gap: 6px;
  flex: 1;
  min-height: 0;
  margin-right: 20px;
  padding: 8px 8px 0;
  border: 1px solid #000;
  border-bottom: 0;
`

const GalleryStl = styled.div`
  display: flex;
  flex-direction: column;
  flex: 1;
  min-width: 0;
`

const GalleryBarStl = styled.div`
  display: flex;
  align-items: center;
  gap: 7px;
  height: 26px;
  margin-bottom: 1px;
  padding-left: 4px;
  border: 1px solid;
  border-color: #fff #a0a0a0 #a0a0a0 #fff;
`

const GalleryButtonStl = styled.button`
  padding: 0;
  border: 0;
  background: none;
`

const GalleryListStl = styled.div`
  flex: 1;
  min-height: 0;
  background: #fff;
  ${sunken}
  border-bottom: 0;
`

const FileStl = styled.div`
  display: flex;
  flex-direction: column;
  align-items: center;
  gap: 3px;
  width: 64px;
  padding-top: 4px;
`

const FileNameStl = styled.span`
  width: 100%;
  padding-left: 3px;
  background: #f0f0f0;
  line-height: 13px;
`

const SideStl = styled.div`
  display: grid;
  grid-template: 23px 150px / 97px 97px;
  gap: 6px;
`

const PushButtonStl = styled.button`
  padding: 0;
  background: #f0f0f0;
  ${raised}
`

const PreviewStl = styled.div`
  grid-column: span 2;
  border: 1px solid #000;
`

const PROPERTIES = [
  {label: '常规', active: true},
  {label: '属性', sign: '+'},
  {label: '动画', sign: '+', bold: true},
  {label: '事件', sign: '+'},
]

const Properties = () => (
  <PropertiesStl>
    <DockTitleStl $left={1} $right={2}>
      <DockNameStl><Label>图形视图_1(GraphicsView)</Label></DockNameStl>
      <DockButtons/>
    </DockTitleStl>
    <PropertiesBodyStl>
      <PropertyTreeStl>
        <TreeNodes nodes={PROPERTIES} height={13}/>
      </PropertyTreeStl>
      <PropertyPageStl>
        <PageContentStl>
          <PageTitleStl>常规</PageTitleStl>
          <PageBoxStl>
            <GalleryStl>
              <GalleryBarStl>
                {['add', 'minus', 'gridView', 'listView'].map(name => (
                  <GalleryButtonStl key={name} type="button" aria-label={name}><Icon name={name}/></GalleryButtonStl>
                ))}
              </GalleryBarStl>
              <GalleryListStl>
                <FileStl>
                  <Icon name="crossDim" size={22}/>
                  <FileNameStl><Label>删除01.…</Label></FileNameStl>
                </FileStl>
              </GalleryListStl>
            </GalleryStl>
            <SideStl>
              <PushButtonStl type="button">设置</PushButtonStl>
              <PushButtonStl type="button">清空</PushButtonStl>
              <PreviewStl/>
            </SideStl>
          </PageBoxStl>
        </PageContentStl>
        <ScrollBar share={82}/>
      </PropertyPageStl>
    </PropertiesBodyStl>
  </PropertiesStl>
)


/* ---------- toolbox ---------- */

const ToolboxStl = styled.aside`
  display: flex;
  flex-direction: column;
  min-height: 0;
  margin-left: 4px;
  padding-bottom: 6px;
  border-left: 2px solid #808080;
`

const ToolboxBodyStl = styled.div`
  display: flex;
  flex-direction: column;
  flex: 1;
  min-height: 0;
  border-top: 2px solid #696969;
  border-left: 1px solid #696969;
`

const PointerRowStl = styled.div`
  display: flex;
  align-items: center;
  flex: none;
  height: 26px;
  padding-left: 5px;
  border-bottom: 1px solid #a0a0a0;
`

const SectionButtonStl = styled.button`
  flex: none;
  height: 22px;
  padding: 0 4px;
  border: 0;
  border-top: 1px solid #fff;
  border-bottom: 1px solid #a0a0a0;
  background: #f0f0f0;
  text-align: left;
  line-height: 18px;
`

const ObjectListStl = styled.div`
  flex: 1;
  min-height: 0;
  margin-bottom: 1px;
  padding: 7px 0 0 6px;
  border-top: 2px solid #696969;
  border-left: 1px solid #696969;
  background: #fff;
`

const ObjectStl = styled.li`
  display: flex;
  align-items: center;
  gap: 6px;
  height: 16px;
  margin-bottom: 12px;
  padding-left: 3px;
  background: ${p => p.$active ? '#f0f0f0' : 'none'};
`

const OBJECTS = [
  ['line', '线'],
  ['polyline', '折线'],
  ['polygon', '多边形'],
  ['ellipse', '椭圆'],
  ['circle', '圆'],
  ['rect', '矩形'],
  ['table', '简单表格'],
  ['textField', '文本域'],
  ['numberField', '数字IO域'],
  ['charField', '字符IO域'],
  ['dateField', '日期时间域'],
  ['graphicField', '图形IO域'],
  ['symbolField', '符号IO域'],
  ['graphicView', '图形视图'],
  ['button', '按钮'],
  ['textSwitch', '文本开关'],
  ['graphicSwitch', '图形开关'],
  ['bar', '棒图'],
]

const Toolbox = () => (
  <ToolboxStl>
    <DockTitleStl $left={1}><DockNameStl>工具</DockNameStl></DockTitleStl>
    <ToolboxBodyStl>
      <PointerRowStl><Icon name="pointer"/></PointerRowStl>
      <SectionButtonStl type="button">简单对象</SectionButtonStl>
      <ObjectListStl>
        <ul>
          {OBJECTS.map(([icon, label]) => (
            <ObjectStl key={icon} $active={icon === 'button'}>
              <Icon name={icon}/>
              <span><Label>{label}</Label></span>
            </ObjectStl>
          ))}
        </ul>
      </ObjectListStl>
      <SectionButtonStl type="button">复杂对象</SectionButtonStl>
      <SectionButtonStl type="button">图形</SectionButtonStl>
      <SectionButtonStl type="button">对象查看器</SectionButtonStl>
    </ToolboxBodyStl>
  </ToolboxStl>
)


/* ---------- output ---------- */

const OutputStl = styled.section`
  flex: none;
  height: 80px;
  overflow: hidden;
  border-top: 2px solid #808080;
  background: #fff;
`

const OutputTitleStl = styled.div`
  background: #f0f0f0;
  border-bottom: 2px solid #808080;
`

// the description column takes what is left, the time column runs past the edge
const OutputTableStl = styled.table`
  width: calc(100% + 89px);
  table-layout: fixed;
  border-collapse: collapse;

  th {
    height: 20px;
    padding: 0;
    border-right: 2px solid #696969;
    border-bottom: 2px solid #696969;
    background: #f0f0f0;
    font-weight: 400;
    line-height: 18px;
  }

  td {
    height: 20px;
    padding: 0 0 1px 3px;
    line-height: 18px;
  }
`

const LogRowStl = styled.tr`
  color: ${p => p.$warning ? '#00f' : '#000'};
`

const NarrowColStl = styled.col`
  width: 384px;
`

const LOG = [
  ['信息:', '编译...', '10:22:52'],
  ['警告:', '没有给图形视图组态图片.', '10:22:52'],
]

const Output = () => (
  <OutputStl>
    <OutputTitleStl><DockTitleStl $height={20}><DockNameStl>输出</DockNameStl></DockTitleStl></OutputTitleStl>
    <OutputTableStl>
      <colgroup>
        <NarrowColStl/>
        <col/>
        <NarrowColStl/>
      </colgroup>
      <thead>
        <tr>
          <th>分类</th>
          <th>描述</th>
          <th>时间</th>
        </tr>
      </thead>
      <tbody>
        {LOG.map((row, i) => (
          <LogRowStl key={i} $warning={i === 1}>
            {row.map((text, j) => <td key={j}><Label>{text}</Label></td>)}
          </LogRowStl>
        ))}
      </tbody>
    </OutputTableStl>
  </OutputStl>
)


const MENU = ['项目(P)', '编辑(E)', '格式(F)', '视图(V)', '选项(O)', '帮助(H)']

export default function App() {
  return (
    <>
      <GlobalStyle/>
      <Gradients/>
      <WindowStl>
        <TitleBarStl><Icon name="app"/><span>弹窗.hmidb</span></TitleBarStl>
        <MenuBarStl>
          {MENU.map(item => <MenuButtonStl key={item} type="button"><Label>{item}</Label></MenuButtonStl>)}
        </MenuBarStl>
        <Toolbar/>
        <WorkspaceStl>
          <ProjectDockStl>
            <DockTitleStl>
              <DockNameStl>项目</DockNameStl>
              <DockButtons/>
            </DockTitleStl>
            <ProjectTreeStl>
              <TreeNodes nodes={PROJECT} height={16}/>
            </ProjectTreeStl>
          </ProjectDockStl>
          <CenterStl>
            <Editor/>
            <Properties/>
          </CenterStl>
          <Toolbox/>
        </WorkspaceStl>
        <Output/>
      </WindowStl>
    </>
  )
}
